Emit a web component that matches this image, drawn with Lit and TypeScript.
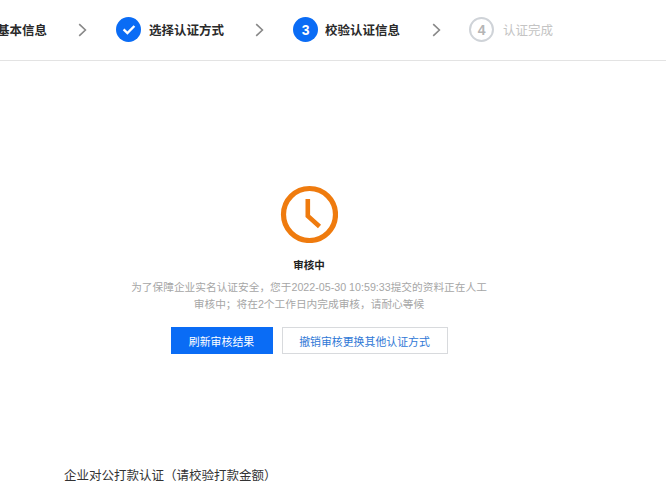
import { LitElement, html, css } from "lit";
import { customElement } from "lit/decorators.js";

const chevron = html`<svg class="chev" width="9" height="14" viewBox="0 0 9 14"><path d="M1.2 1.2 7.4 7 1.2 12.8" fill="none" stroke="#888" stroke-width="1.6"/></svg>`;

@customElement("app-root")
export class AppRoot extends LitElement {
  static styles = css`
    :host { display: block; width: 666px; height: 500px; overflow: hidden; background: #fff;
      font-family: "Liberation Sans", "Noto Sans CJK SC", sans-serif; color: #222; }
    .steps { height: 61px; box-sizing: border-box; border-bottom: 1px solid #e3e3e3; padding-bottom: 1px; display: flex; align-items: center; overflow: hidden; }
    .row { display: flex; align-items: center; margin-left: -3px; flex: none; }
    .step { display: flex; align-items: center; gap: 8px; font-size: 12.5px; font-weight: 700; color: #2a2a2a; white-space: nowrap; }
    .step.s3 { gap: 7px; margin-right: 1px; }
    .step.off { color: #c4c4c4; font-weight: 400; }
    .chev { margin: 0 29px 0 31px; flex: none; }
    .dot { width: 25px; height: 25px; border-radius: 50%; background: #0a6cf5; color: #fff; display: flex; align-items: center; justify-content: center; font-size: 14px; font-weight: 700; flex: none; }
    .dot.off { box-sizing: border-box; margin-left: -1px; margin-right: 1px; background: #fff; border: 2px solid #cfd3d8; color: #b5b5b5; }
    .main { width: 618px; display: flex; flex-direction: column; align-items: center; padding-top: 124px; }
    .clock { display: block; }
    .title { margin-top: 14px; font-size: 10.5px; line-height: 16px; font-weight: 700; color: #222; }
    .desc { margin-top: 6px; width: 362px; text-align: center; font-size: 10.7px; line-height: 17px; color: #a6a6a6; }
    .btns { display: flex; gap: 9px; margin-top: 14px; }
    button { font: inherit; font-size: 10.9px; height: 27px; padding: 0; border-radius: 0; box-sizing: border-box; }
    .pri { width: 102px; background: #0a6cf5; color: #fff; border: none; }
    .sec { width: 166px; background: #fff; color: #2f78d6; border: 1px solid #d8dadd; }
    .foot { margin-top: 113px; padding-left: 64px; font-size: 12.5px; line-height: 18px; color: #333; }
  `;

  render() {
    return html`
      <div class="steps"><div class="row">
        <div class="step">基本信息</div>
        ${chevron}
        <div class="step"><span class="dot"><svg width="14" height="11" viewBox="0 0 14 11"><path d="M1.6 5.4 5.4 9 12.4 2" fill="none" stroke="#fff" stroke-width="2.4"/></svg></span>选择认证方式</div>
        ${chevron}
        <div class="step s3"><span class="dot">3</span>校验认证信息</div>
        ${chevron}
        <div class="step off"><span class="dot off">4</span>认证完成</div>
      </div></div>
      <div class="main">
        <svg class="clock" width="58" height="58" viewBox="0 0 58 58">
          <circle cx="29.5" cy="29.5" r="26" fill="none" stroke="#ef7b0e" stroke-width="5.2"/>
          <path d="M27.8 14V31L39.5 41.5" fill="none" stroke="#ef7b0e" stroke-width="4.6"/>
        </svg>
        <div class="title">审核中</div>
        <div class="desc">为了保障企业实名认证安全，您于2022-05-30 10:59:33提交的资料正在人工审核中；将在2个工作日内完成审核，请耐心等候</div>
        <div class="btns">
          <button class="pri">刷新审核结果</button>
          <button class="sec">撤销审核更换其他认证方式</button>
        </div>
      </div>
      <div class="foot">企业对公打款认证（请校验打款金额）</div>
    `;
  }
}
